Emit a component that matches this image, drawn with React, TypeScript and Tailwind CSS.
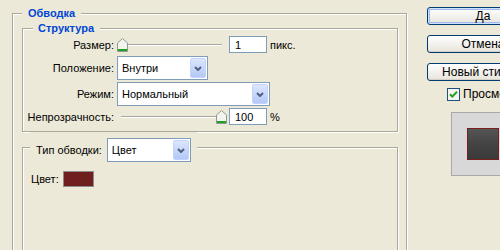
import React from "react";

function Chevron() {
  return (
    <svg width="8" height="5" viewBox="0 0 8 5">
      <path d="M1 1l3 3 3-3" stroke="#4D6185" strokeWidth="2" fill="none" />
    </svg>
  );
}

function Combo({ value, className = "" }: { value: string; className?: string }) {
  return (
    <div className={`flex h-[24px] items-stretch border border-[#7F9DB9] bg-white p-[1px] ${className}`}>
      <span className="flex flex-1 items-center pl-[3px] font-normal text-black">{value}</span>
      <span className="flex w-[16px] items-center justify-center rounded-[2px] border border-[#C3D3FD] bg-gradient-to-b from-[#DCE6FD] to-[#B4C8F6]">
        <Chevron />
      </span>
    </div>
  );
}

function Thumb() {
  return (
    <svg width="11" height="14" viewBox="0 0 11 14" className="shrink-0">
      <path d="M0.5 5 L5.5 0.5 L10.5 5 V13.5 H0.5 Z" fill="#F3F4EE" stroke="#8E9A96" />
      <rect x="1" y="11" width="9" height="2" fill="#21A121" />
    </svg>
  );
}

function Track() {
  return <div className="h-[2px] flex-1 border-t border-[#A7A6A0] bg-white" />;
}

function NumField({ value }: { value: string }) {
  return (
    <div className="flex h-[17px] w-[38px] items-center border border-[#7F9DB9] bg-white pl-[5px]">{value}</div>
  );
}

function XPButton({ children, primary = false, className = "" }: { children: React.ReactNode; primary?: boolean; className?: string }) {
  return (
    <button
      className={`flex h-[18px] w-[112px] items-center justify-center rounded-[3px] border border-[#003C74] bg-gradient-to-b from-white to-[#E6E4DB] text-[12px] leading-[14px] text-black ${
        primary ? "shadow-[inset_0_0_0_1px_#CFE0FB,inset_0_0_0_2px_#9DBBEF]" : "shadow-[inset_0_-1px_0_#D6D0C5]"
      } ${className}`}
    >
      {children}
    </button>
  );
}

const etched = "border border-[#ACA899] shadow-[inset_1px_1px_0_#fff,1px_1px_0_#fff]";

export default function App() {
  return (
    <div className="flex h-[250px] w-[500px] overflow-hidden bg-[#ECE9D8] font-['Liberation_Sans',sans-serif] text-[11px] leading-[14px] text-black">
      {/* Обводка */}
      <fieldset className={`ml-[12px] mt-[6px] h-[300px] w-[395px] shrink-0 ${etched}`}>
        <legend className="ml-[9px] bg-[#ECE9D8] px-[6px] font-bold text-[#0046D5]">Обводка</legend>
        <div className="pl-[9px] pr-[8px] pt-[1px]">
          {/* Структура */}
          <fieldset className={etched}>
            <legend className="ml-[10px] bg-[#ECE9D8] pl-[5px] pr-[6px] font-bold text-[#0046D5]">Структура</legend>
            <div className="flex flex-col pb-[6px] pt-[1px]">
              <div className="flex h-[17px] items-center">
                <span className="w-[91px] text-right">Размер:</span>
                <div className="ml-[3px] flex h-[14px] w-[105px] items-center">
                  <Thumb />
                  <Track />
                </div>
                <div className="ml-[7px]">
                  <NumField value="1" />
                </div>
                <span className="ml-[3px]">пикс.</span>
              </div>
              <div className="mt-[3px] flex items-center">
                <span className="w-[91px] text-right">Положение:</span>
                <Combo value="Внутри" className="ml-[3px] w-[91px]" />
              </div>
              <div className="mt-[2px] flex items-center">
                <span className="w-[91px] text-right">Режим:</span>
                <Combo value="Нормальный" className="ml-[3px] w-[153px]" />
              </div>
              <div className="mt-[2px] flex h-[17px] items-center">
                <span className="w-[91px] text-right">Непрозрачность:</span>
                <div className="ml-[7px] flex h-[14px] w-[106px] items-center">
                  <Track />
                  <Thumb />
                </div>
                <div className="ml-[2px]">
                  <NumField value="100" />
                </div>
                <span className="ml-[3px]">%</span>
              </div>
            </div>
          </fieldset>

          {/* Тип обводки */}
          <fieldset className={`h-[200px] ${etched}`}>
            <legend className="ml-[7px] bg-[#ECE9D8] pl-[6px] pr-[6px] pt-[6px]">
              <div className="flex items-center gap-[5px]">
                <span>Тип обводки:</span>
                <Combo value="Цвет" className="w-[84px]" />
              </div>
            </legend>
            <div className="flex items-center pl-[8px] pt-[9px]">
              <span>Цвет:</span>
              <span className="ml-[4px] h-[16px] w-[31px] border border-[#8C8C8C] bg-[#6E1F1E]" />
            </div>
          </fieldset>
        </div>
      </fieldset>

      {/* Buttons and preview */}
      <div className="ml-[20px] flex w-[112px] shrink-0 flex-col pt-[7px]">
        <XPButton primary>Да</XPButton>
        <XPButton className="mt-[10px]">Отмена</XPButton>
        <XPButton className="mt-[10px]">Новый стиль...</XPButton>
        <label className="ml-[20px] mt-[6px] flex items-center gap-[3px] text-[12px]">
          <svg width="13" height="13" viewBox="0 0 13 13" className="shrink-0">
            <rect x="0.5" y="0.5" width="12" height="12" fill="#F4F4F0" stroke="#1C5180" />
            <path d="M3 6.2 L5.3 8.6 L10 3.8" stroke="#21A121" strokeWidth="2" fill="none" />
          </svg>
          <span>Просмотр</span>
        </label>
        <div className="ml-[24px] mt-[11px] flex h-[64px] w-[64px] items-center justify-center border border-[#A8A8A8] bg-[#D8D8D8]">
          <div className="h-[32px] w-[32px] border border-[#7A1E1C] bg-gradient-to-b from-[#555555] via-[#444444] to-[#3A3A3A]" />
        </div>
      </div>
    </div>
  );
}
